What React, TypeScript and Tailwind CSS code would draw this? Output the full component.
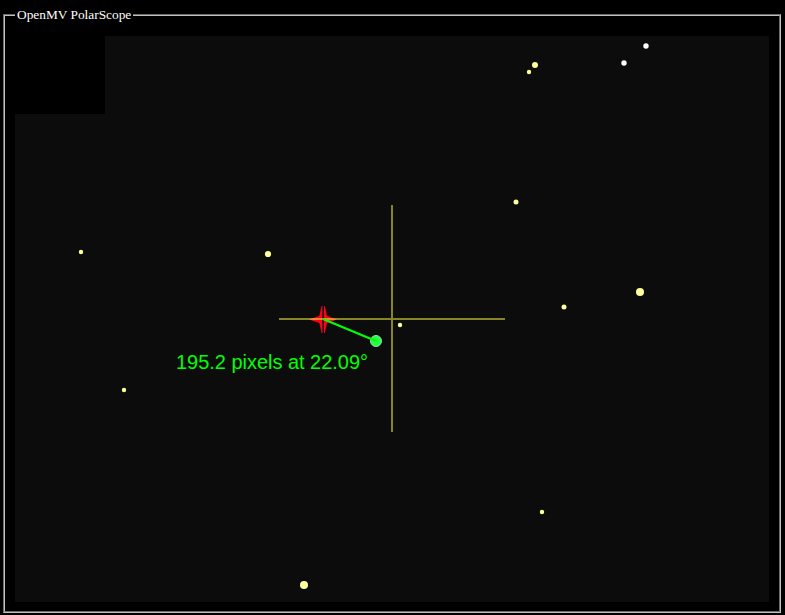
type Star = { x: number; y: number; r: number; color: string };

const YELLOW = "#ffff99";

const stars: Star[] = [
  { x: 646, y: 46, r: 2.7, color: "#ffffff" },
  { x: 624, y: 63, r: 2.7, color: "#ffffff" },
  { x: 535, y: 65, r: 3, color: YELLOW },
  { x: 529, y: 72, r: 2.2, color: YELLOW },
  { x: 516, y: 202, r: 2.5, color: YELLOW },
  { x: 81, y: 252, r: 2.2, color: YELLOW },
  { x: 268, y: 254, r: 3.1, color: YELLOW },
  { x: 640, y: 292, r: 4, color: YELLOW },
  { x: 564, y: 307, r: 2.5, color: YELLOW },
  { x: 400, y: 325, r: 2.2, color: YELLOW },
  { x: 124, y: 390, r: 2.2, color: YELLOW },
  { x: 542, y: 512, r: 2.2, color: YELLOW },
  { x: 304, y: 585, r: 4, color: YELLOW },
];

function SkyChart() {
  return (
    <svg className="block h-[566px] w-[754px] bg-[#0c0c0c]" viewBox="15 36 754 566">
      <rect x="15" y="36" width="90" height="78" fill="#000000" />
      {stars.map((s) => (
        <circle key={`${s.x}-${s.y}`} cx={s.x} cy={s.y} r={s.r} fill={s.color} />
      ))}
      <path
        d="M322.4 306 V333 H321.6 L319.3 323 L309 319.4 L319.3 316 L321.6 306 Z M324 306 V333 H324.8 L327 323 L337 319.4 L327 316 L324.8 306 Z"
        fill="#ff0018"
      />
      <path d="M279 319 H505 M392 205 V432" stroke="#ffff44" strokeOpacity="0.5" strokeWidth="2" />
      <circle cx="376" cy="341" r="5.5" fill="#22ff44" stroke="#99dd99" strokeWidth="1" />
      <path d="M323 319 L376 341" stroke="#00ff00" strokeWidth="2.2" />
      <text
        x="176"
        y="369"
        textLength="192"
        fill="#00ff00"
        className="font-['Liberation_Sans',Arial,sans-serif] text-[20px]"
      >
        195.2 pixels at 22.09°
      </text>
    </svg>
  );
}

export default function App() {
  return (
    <main className="h-[615px] w-[785px] overflow-hidden bg-black pt-[7px] pl-[3px]">
      <fieldset className="h-[606px] w-[778px] border-2 border-[#c0c0c0] pl-[10px] [border-style:groove]">
        <legend className="ml-0 h-[16px] px-[2px] font-['Liberation_Serif','Times_New_Roman',serif] text-[13.35px] leading-[16px] whitespace-nowrap text-white">
          OpenMV PolarScope
        </legend>
        <div className="pt-[13px]">
          <SkyChart />
        </div>
      </fieldset>
    </main>
  );
}
